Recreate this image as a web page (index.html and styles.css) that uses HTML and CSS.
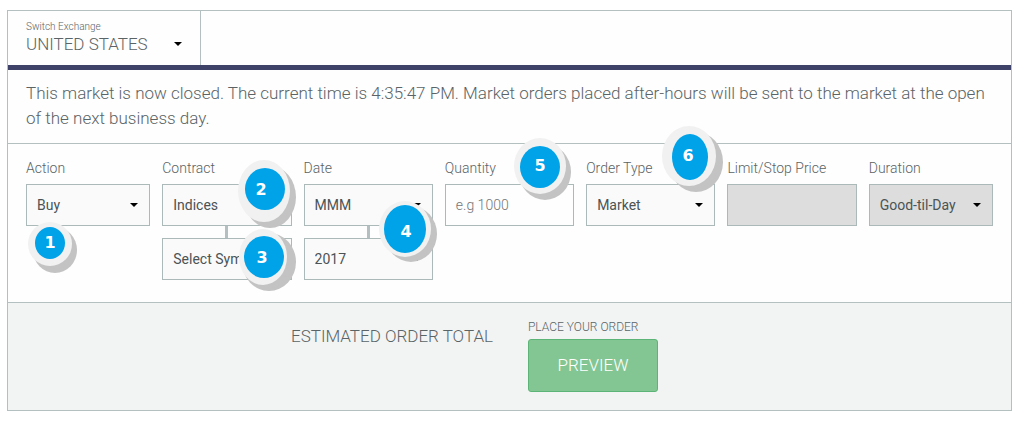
FILE: index.html
```html
<!DOCTYPE html>
<html lang="en">
<head>
<meta charset="utf-8">
<title>Place an order</title>
<link rel="stylesheet" href="styles.css">
</head>
<body>
<form class="ticket">
  <header class="ticket-head">
    <div class="exchange">
      <label class="exchange-label" for="exchange">Switch Exchange</label>
      <select class="exchange-select" id="exchange"><option>UNITED STATES</option></select>
    </div>
  </header>
  <p class="notice">This market is now closed. The current time is 4:35:47 PM. Market orders placed after-hours will be sent to the market at the open of the next business day.</p>
  <div class="fields">
    <div class="field">
      <label class="field-label" for="action">Action</label>
      <select class="control" id="action"><option>Buy</option></select>
      <svg class="badge badge-1" viewBox="0 0 72 76"><ellipse class="shade" cx="35" cy="38" rx="22" ry="23"/><ellipse class="ring" cx="30" cy="32" rx="22" ry="22"/><ellipse class="disc" cx="30" cy="31" rx="15" ry="16"/><text class="digit" x="30" y="36">1</text></svg>
    </div>
    <div class="field">
      <label class="field-label" for="contract">Contract</label>
      <select class="control" id="contract"><option>Indices</option></select>
      <span class="link"></span>
      <select class="control" aria-label="Symbol"><option>Select Symbol</option></select>
      <svg class="badge badge-2" viewBox="0 0 72 76"><ellipse class="shade" cx="36" cy="38" rx="26" ry="31"/><ellipse class="ring" cx="30" cy="32" rx="26" ry="31"/><ellipse class="disc" cx="31" cy="30" rx="20" ry="21"/><text class="digit" x="27" y="36">2</text></svg>
      <svg class="badge badge-3" viewBox="0 0 72 76"><ellipse class="shade" cx="36" cy="37" rx="27" ry="29"/><ellipse class="ring" cx="30" cy="32" rx="24" ry="28"/><ellipse class="disc" cx="31" cy="32" rx="20" ry="21"/><text class="digit" x="29" y="38">3</text></svg>
    </div>
    <div class="field">
      <label class="field-label" for="month">Date</label>
      <select class="control" id="month"><option>MMM</option></select>
      <span class="link"></span>
      <select class="control" aria-label="Year"><option>2017</option></select>
      <svg class="badge badge-4" viewBox="0 0 72 76"><ellipse class="shade" cx="36" cy="37" rx="26" ry="28"/><ellipse class="ring" cx="30" cy="32" rx="26" ry="28"/><ellipse class="disc" cx="30" cy="32" rx="21" ry="24"/><text class="digit" x="31" y="40">4</text></svg>
    </div>
    <div class="field">
      <label class="field-label" for="quantity">Quantity</label>
      <input class="control control-text" id="quantity" type="text" placeholder="e.g 1000">
      <svg class="badge badge-5" viewBox="0 0 72 76"><ellipse class="shade" cx="35" cy="38" rx="26" ry="28"/><ellipse class="ring" cx="30" cy="32" rx="26" ry="28"/><ellipse class="disc" cx="30" cy="33" rx="20" ry="21"/><text class="digit" x="30" y="37">5</text></svg>
    </div>
    <div class="field">
      <label class="field-label" for="type">Order Type</label>
      <select class="control" id="type"><option>Market</option></select>
      <svg class="badge badge-6" viewBox="0 0 72 76"><ellipse class="shade" cx="37" cy="38" rx="27" ry="30"/><ellipse class="ring" cx="30" cy="32" rx="27" ry="30"/><ellipse class="disc" cx="31" cy="33" rx="18" ry="23"/><text class="digit" x="29" y="37">6</text></svg>
    </div>
    <div class="field">
      <label class="field-label" for="price">Limit/Stop Price</label>
      <input class="control control-text control-off" id="price" type="text" disabled>
    </div>
    <div class="field">
      <label class="field-label" for="duration">Duration</label>
      <select class="control control-off" id="duration" disabled><option>Good-til-Day</option></select>
    </div>
  </div>
  <footer class="ticket-foot">
    <div class="total">ESTIMATED ORDER TOTAL</div>
    <div class="place">
      <span class="place-label">PLACE YOUR ORDER</span>
      <button class="preview" type="button">PREVIEW</button>
    </div>
  </footer>
</form>
</body>
</html>
```
FILE: styles.css
```css
* {
  box-sizing: border-box;
}

body {
  margin: 10px 12px 10px 7px;
  background: #fff;
  color: #5a6466;
  font-family: Roboto, "Liberation Sans", sans-serif;
  font-weight: 300;
}

.ticket {
  border: 1px solid #b4c0c0;
  background: #fefefe;
}

.ticket-head {
  display: flex;
  border-bottom: 5px solid #3e4168;
}

.exchange {
  display: flex;
  flex-direction: column;
  width: 193px;
  padding: 10px 18px 10px;
  border-right: 1px solid #b4c0c0;
}

.exchange-label {
  font-size: 10px;
  line-height: 12px;
}

select {
  appearance: none;
  background-image: url("data:image/svg+xml,%3Csvg xmlns='http://www.w3.org/2000/svg' viewBox='0 0 8 4'%3E%3Cpath d='M0 0h8L4 4z'/%3E%3C/svg%3E");
  background-position: right center;
  background-repeat: no-repeat;
  background-size: 8px 4px;
}

.exchange-select {
  width: 100%;
  height: 22px;
  padding: 0;
  border: 0;
  background-color: transparent;
  color: inherit;
  font: inherit;
  font-size: 17px;
}

.notice {
  margin: 0;
  padding: 11px 20px 12px 18px;
  border-bottom: 1px solid #b4c0c0;
  font-size: 17px;
  line-height: 25px;
}

.fields {
  display: grid;
  grid-template-columns: 124fr repeat(5, 129fr) 124fr;
  column-gap: 12px;
  padding: 14px 18px 22px;
}

.field {
  display: flex;
  position: relative;
  flex-direction: column;
  min-width: 0;
}

.field-label {
  margin-bottom: 6px;
  font-size: 14px;
  line-height: 20px;
}

.control {
  width: 100%;
  height: 42px;
  padding: 0 10px;
  border: 1px solid #acb9b9;
  border-radius: 0;
  background-color: #fafafa;
  color: #4b5355;
  font: 400 14px Roboto, "Liberation Sans", sans-serif;
  opacity: 1;
}

select.control {
  background-position: right 11px center;
}

.control-text {
  background-color: #fefefe;
}

.control-text::placeholder {
  color: #757575;
  font-weight: 300;
}

.control-off {
  background-color: #ddd;
}

.link {
  align-self: center;
  width: 3px;
  height: 12px;
  background: #b4c0c0;
}

.badge {
  position: absolute;
  width: 72px;
  height: 76px;
  pointer-events: none;
}

.badge-1 { left: -6px; top: 54px; }
.badge-2 { left: 72px; top: 1px; }
.badge-3 { left: 71px; top: 67px; }
.badge-4 { left: 71px; top: 39px; }
.badge-5 { left: 65px; top: -24px; }
.badge-6 { left: 73px; top: -34px; }

.shade { fill: #c3c3c3; }
.ring { fill: #f1f1f1; }
.disc { fill: #00a2e8; }

.digit {
  fill: #fff;
  font: bold 16px "DejaVu Sans", sans-serif;
  text-anchor: middle;
}

.ticket-foot {
  display: flex;
  align-items: flex-start;
  gap: 35px;
  padding: 16px 18px 18px 283px;
  border-top: 1px solid #b4c0c0;
  background: #f2f4f4;
}

.total {
  padding-top: 6px;
  font-size: 17px;
  line-height: 22px;
}

.place {
  display: flex;
  flex-direction: column;
}

.place-label {
  margin-bottom: 4px;
  font-size: 12px;
  line-height: 16px;
}

.preview {
  width: 130px;
  height: 53px;
  padding: 0 0 2px;
  border: 1px solid #5cb576;
  border-radius: 3px;
  background: #84c693;
  color: #fff;
  font: 300 17px Roboto, "Liberation Sans", sans-serif;
}
```
